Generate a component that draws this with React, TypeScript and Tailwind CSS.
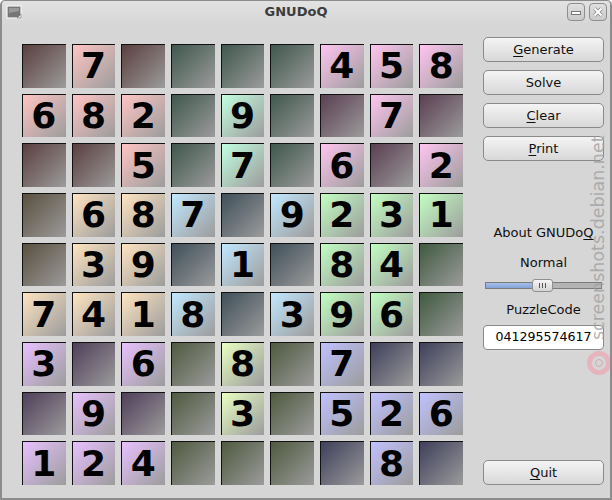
const rows = [
  "_7____458",
  "682_9__7_",
  "__5_7_6_2",
  "_687_9231",
  "_39_1_84_",
  "7418_396_",
  "3_6_8_7__",
  "_9__3_526",
  "124____8_",
];

const boxClasses = [
  ["from-[#ffc4c4] to-[#9c9c9c]", "from-[#c0ffe0] to-[#9c9c9c]", "from-[#ffc4f0] to-[#9c9c9c]"],
  ["from-[#ffe4c0] to-[#9c9c9c]", "from-[#c0e8ff] to-[#9c9c9c]", "from-[#c0ffc0] to-[#9c9c9c]"],
  ["from-[#e8c0ff] to-[#9c9c9c]", "from-[#e8ffc0] to-[#9c9c9c]", "from-[#c0c0ff] to-[#9c9c9c]"],
];
const boxEmpty = [
  ["from-[#5a4040] to-[#9c9c9c]", "from-[#40584e] to-[#9c9c9c]", "from-[#5a4052] to-[#9c9c9c]"],
  ["from-[#5a5040] to-[#9c9c9c]", "from-[#40505a] to-[#9c9c9c]", "from-[#405a40] to-[#9c9c9c]"],
  ["from-[#50405a] to-[#9c9c9c]", "from-[#505a40] to-[#9c9c9c]", "from-[#40405a] to-[#9c9c9c]"],
];

function Btn({ pre = "", u = "", post = "" }: { pre?: string; u?: string; post?: string }) {
  return (
    <button className="h-[25px] w-[121px] shrink-0 rounded-[5px] border border-[#8a8a8a] bg-gradient-to-b from-[#f4f4f4] to-[#d8d8d8] text-[13px] leading-none text-[#101010]">
      {pre}
      <span className="underline underline-offset-2">{u}</span>
      {post}
    </button>
  );
}

export default function App() {
  return (
    <div className="relative flex h-[500px] w-[612px] flex-col overflow-hidden rounded-t-[5px] border-x-2 border-b-2 border-t border-[#8c8c8c] bg-[#d6d6d6] font-['DejaVu_Sans',sans-serif]">
      <div className="relative flex h-[24px] shrink-0 items-center justify-between bg-gradient-to-b from-[#e2e2e2] to-[#d6d6d6] pl-[4px] pr-[1px]">
        <svg width="16" height="14" viewBox="0 0 16 14" className="mt-[-3px]">
          <rect x="1" y="1" width="14" height="12" fill="#777" stroke="#f4f4f4" strokeWidth="1.2" />
          <path d="M3 3h10v3L3 8z" fill="#9a9a9a" />
          <path d="M11 13l4-4v4z" fill="#e8e8e8" stroke="#555" strokeWidth="0.5" />
        </svg>
        <span className="absolute inset-x-0 top-[3px] pr-[20px] text-center text-[13px] font-bold leading-[16px] text-[#3c3c3c]">
          GNUDoQ
        </span>
        <div className="mr-[2px] mt-[-3px] flex gap-[4px]">
          <div className="flex h-[18px] w-[18px] items-center justify-center rounded-[4px] border border-[#8e8e8e] bg-gradient-to-b from-[#e0e0e0] to-[#cacaca]">
            <div className="mt-[3px] h-[4px] w-[10px] border border-[#777] bg-white" />
          </div>
          <div className="flex h-[18px] w-[18px] items-center justify-center rounded-[4px] border border-[#8e8e8e] bg-gradient-to-b from-[#e0e0e0] to-[#cacaca]">
            <svg width="12" height="12" viewBox="0 0 12 12">
              <path d="M2.5 2.5l7 7M9.5 2.5l-7 7" stroke="#8a8a8a" strokeWidth="3.8" />
              <path d="M2.5 2.5l7 7M9.5 2.5l-7 7" stroke="#fff" strokeWidth="2" />
            </svg>
          </div>
        </div>
      </div>

      <div className="flex flex-1 pl-[20px] pt-[19px]">
        <div className="grid h-[441px] w-[441px] shrink-0 grid-cols-9 grid-rows-9 gap-[6px]">
          {rows.flatMap((row, r) =>
            row.split("").map((c, i) => {
              const bi = Math.floor(r / 3);
              const bj = Math.floor(i / 3);
              const filled = c !== "_";
              return (
                <div
                  key={`${r}-${i}`}
                  className={`flex items-center justify-center border-l border-t border-[#111] bg-gradient-to-br pr-[1px] text-[36px] font-bold leading-none text-black ${
                    filled ? boxClasses[bi][bj] : boxEmpty[bi][bj]
                  }`}
                >
                  {filled ? c : ""}
                </div>
              );
            }),
          )}
        </div>

        <div className="ml-[20px] mt-[-7px] flex w-[121px] flex-col items-center pb-[13px] text-[13px] text-[#101010]">
          <div className="flex flex-col gap-[8px]">
            <Btn u="G" post="enerate" />
            <Btn pre="Solve" />
            <Btn u="C" post="lear" />
            <Btn u="P" post="rint" />
          </div>
          <div className="mt-[63px] leading-[17px]">
            About GNUDo<span className="underline underline-offset-2">Q</span>
          </div>
          <div className="mt-[13px] leading-[17px]">Normal</div>
          <div className="relative mt-[8px] h-[13px] w-full">
            <div className="absolute left-[2px] right-[2px] top-[3px] flex h-[7px] overflow-hidden border border-[#7c7c7c]">
              <div className="w-[47px] bg-gradient-to-b from-[#a4bfe8] to-[#84a4d8]" />
              <div className="flex-1 bg-[#b4b4b4]" />
            </div>
            <div className="absolute left-[49px] top-0 flex h-[13px] w-[21px] items-center justify-center gap-[2px] rounded-[3px] border border-[#909090] bg-gradient-to-b from-[#f4f4f4] to-[#d4d4d4]">
              <div className="h-[5px] w-px bg-[#555]" />
              <div className="h-[5px] w-px bg-[#555]" />
              <div className="h-[5px] w-px bg-[#555]" />
            </div>
          </div>
          <div className="mt-[9px] leading-[17px]">PuzzleCode</div>
          <div className="mt-[7px] flex h-[25px] w-full items-center justify-center rounded-[4px] border border-[#8a8a8a] bg-white text-[12.6px] text-black">
            041295574617
          </div>
          <div className="mt-auto">
            <Btn u="Q" post="uit" />
          </div>
        </div>
      </div>

      <div className="pointer-events-none absolute left-[582px] top-[124px] h-[250px] w-[28px]">
        <div className="absolute bottom-[35px] left-[24px] origin-bottom-left -rotate-90 whitespace-nowrap text-[17.5px] leading-[20px] text-[#a0a0a0]/80">
          screenshots.debian.net
        </div>
        <div className="absolute bottom-0 left-[3px] flex h-[24px] w-[24px] items-center justify-center rounded-full border-[5px] border-[#e6b4bd]">
          <div className="h-[8px] w-[8px] rounded-full border-[1.5px] border-[#d4a8b0]" />
        </div>
      </div>
    </div>
  );
}
